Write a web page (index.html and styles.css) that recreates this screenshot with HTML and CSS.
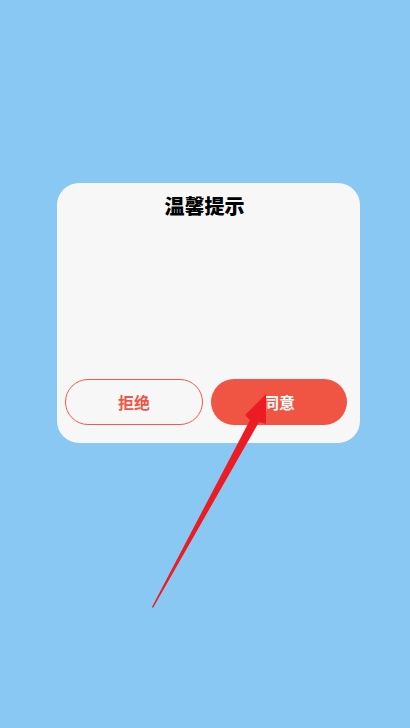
FILE: index.html
```html
<!DOCTYPE html>
<html>
<head>
    <meta charset="utf-8">
    <meta name="viewport" content="width=device-width, initial-scale=1">
    <title>温馨提示</title>
    <link rel="stylesheet" href="styles.css">
</head>
<body>
    <div class="page">
        <div class="dialog">
            <div class="dialog_title">温馨提示</div>
            <div class="dialog_body"></div>
            <div class="dialog_btns">
                <button class="btn btn_refuse">拒绝</button>
                <button class="btn btn_agree">同意</button>
            </div>
        </div>
    </div>
    <!-- стрелка-пометка поверх скриншота -->
    <svg class="arrow" width="410" height="728" viewBox="0 0 410 728">
        <polygon points="152,607 250,420 245,415 266,394 266,424 259,422 153,608" fill="#ec1c24"/>
    </svg>
</body>
</html>
```
FILE: styles.css
```css
html, body {
    margin: 0;
    padding: 0;
}
body {
    background-color: #88c8f2;
    font-family: "Noto Sans CJK SC", "Noto Sans", sans-serif;
    width: 410px;
    height: 728px;
    overflow: hidden;
}
.page {
    padding-top: 183px;
    padding-left: 57px;
}
.dialog {
    width: 303px;
    height: 260px;
    box-sizing: border-box;
    background-color: #f7f7f7;
    border-radius: 22px;
    padding: 8px 13px 18px 8px;
    display: flex;
    flex-direction: column;
}
.dialog_title {
    text-align: center;
    font-size: 20px;
    font-weight: 900;
    color: #000;
    line-height: 30px;
    padding-right: 3px;
}
.dialog_body {
    flex: 1;
}
.dialog_btns {
    display: flex;
    gap: 8px;
}
.btn {
    flex: 1;
    height: 46px;
    border-radius: 23px;
    font-family: "Noto Sans CJK SC", "Noto Sans", sans-serif;
    font-size: 16px;
    font-weight: bold;
    box-sizing: border-box;
    padding: 0;
}
.btn_refuse {
    background-color: transparent;
    border: 1.5px solid #ef5a4a;
    color: #ef5545;
}
.btn_agree {
    background-color: #f05443;
    border: none;
    color: #fff;
}
.arrow {
    position: absolute;
    top: 0;
    left: 0;
    pointer-events: none;
}
```
